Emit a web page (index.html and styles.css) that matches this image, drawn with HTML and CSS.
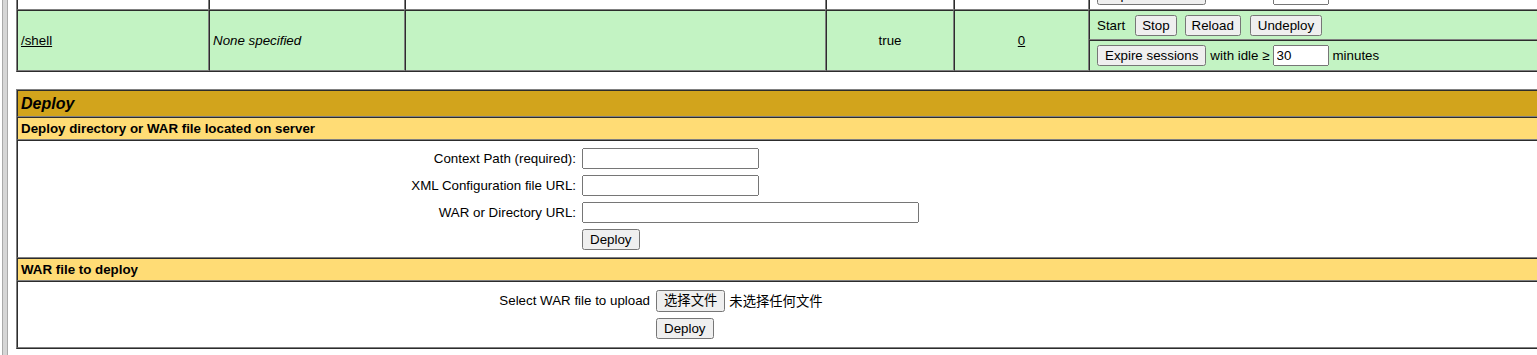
FILE: index.html
```html
<!DOCTYPE html>
<html lang="zh-CN">
<head>
    <meta charset="UTF-8">
    <title>Tomcat Web Application Manager</title>
<link rel="stylesheet" href="styles.css">
</head>
<body>
<div class="page">
    <div class="frame-edge"></div>
    <div class="content">
        <div class="apps-clip">
            <table class="apps">
                <tr class="row-white">
                    <td class="col-path" rowspan="2"><a href="#">/manager</a></td>
                    <td class="col-version" rowspan="2"><i>None specified</i></td>
                    <td class="col-name" rowspan="2">Tomcat Manager Application</td>
                    <td class="col-running" rowspan="2">true</td>
                    <td class="col-sessions" rowspan="2"><a href="#">1</a></td>
                    <td class="cmd">
                        <div class="cmd-line">
                            <span class="start">Start</span>
                            <button>Stop</button>
                            <button>Reload</button>
                            <button class="undeploy">Undeploy</button>
                        </div>
                    </td>
                </tr>
                <tr class="row-white">
                    <td class="cmd">
                        <div class="cmd-line expire">
                            <button>Expire sessions</button>
                            <span>with idle &ge;</span>
                            <input type="text" class="idle" value="30">
                            <span>minutes</span>
                        </div>
                    </td>
                </tr>
                <tr class="row-green">
                    <td class="col-path" rowspan="2"><a href="#">/shell</a></td>
                    <td class="col-version" rowspan="2"><i>None specified</i></td>
                    <td class="col-name" rowspan="2"></td>
                    <td class="col-running" rowspan="2">true</td>
                    <td class="col-sessions" rowspan="2"><a href="#">0</a></td>
                    <td class="cmd">
                        <div class="cmd-line">
                            <span class="start">Start</span>
                            <button>Stop</button>
                            <button>Reload</button>
                            <button class="undeploy">Undeploy</button>
                        </div>
                    </td>
                </tr>
                <tr class="row-green">
                    <td class="cmd">
                        <div class="cmd-line expire">
                            <button>Expire sessions</button>
                            <span>with idle &ge;</span>
                            <input type="text" class="idle" value="30">
                            <span>minutes</span>
                        </div>
                    </td>
                </tr>
            </table>
        </div>

        <table class="deploy">
            <tr>
                <td class="title">Deploy</td>
            </tr>
            <tr>
                <td class="header-left">Deploy directory or WAR file located on server</td>
            </tr>
            <tr>
                <td class="form-cell">
                    <form class="form-grid server">
                        <div class="row-right">Context Path (required):</div>
                        <div class="row-left"><input type="text" class="txt"></div>
                        <div class="row-right">XML Configuration file URL:</div>
                        <div class="row-left"><input type="text" class="txt"></div>
                        <div class="row-right">WAR or Directory URL:</div>
                        <div class="row-left"><input type="text" class="txt wide"></div>
                        <div class="row-right">&nbsp;</div>
                        <div class="row-left"><button type="button">Deploy</button></div>
                    </form>
                </td>
            </tr>
            <tr>
                <td class="header-left">WAR file to deploy</td>
            </tr>
            <tr>
                <td class="form-cell">
                    <form class="form-grid upload">
                        <div class="row-right">Select WAR file to upload</div>
                        <div class="row-left file-pick">
                            <button type="button" class="cjk">选择文件</button>
                            <span class="cjk">未选择任何文件</span>
                        </div>
                        <div class="row-right">&nbsp;</div>
                        <div class="row-left"><button type="button">Deploy</button></div>
                    </form>
                </td>
            </tr>
        </table>
    </div>
</div>
</body>
</html>
```

FILE: styles.css
```css
html, body {
    margin: 0;
    padding: 0;
    overflow: hidden;
    background: #fff;
}

body {
    font-family: "Liberation Sans", Arial, sans-serif;
    font-size: 13.33px;
    color: #000;
}

button, input {
    font-family: "Liberation Sans", Arial, sans-serif;
    font-size: 13.33px;
}

button {
    box-sizing: border-box;
    height: 21px;
    padding: 1px 6px;
}

.cjk {
    font-family: "Liberation Sans", "Noto Sans CJK SC", sans-serif;
}

button.cjk {
    height: 22px;
    line-height: 18px;
    padding: 0 6px;
}

.page {
    display: flex;
    height: 355px;
}

/* left edge of the outer frame */
.frame-edge {
    flex: none;
    margin-left: 2px;
    width: 4px;
    border-left: 1px solid #a9a9a9;
    border-right: 1px solid #a9a9a9;
    background: #d6d6d6;
}

.content {
    flex: none;
    margin-left: 8px;
    width: 1700px;
}

table {
    width: 1700px;
    table-layout: fixed;
    border: 1px outset gray;
    border-spacing: 0;
}

td {
    border: 1px inset gray;
    padding: 3px;
    box-sizing: border-box;
}

a {
    color: #000;
}

/* application list */
.apps-clip {
    margin-top: -52px;
}

.row-white td {
    background: #fff;
}

.row-green td {
    background: #c3f3c3;
}

.col-path {
    width: 192px;
}

.col-version {
    width: 196px;
}

.col-name {
    width: 421px;
}

.col-running {
    width: 128px;
    text-align: center;
}

.col-sessions {
    width: 135px;
    text-align: center;
}

.cmd {
    padding-left: 7px;
}

.cmd-line {
    display: flex;
    align-items: center;
    gap: 8px;
    min-height: 22px;
}

.cmd-line button {
    padding: 1px 5px;
}

.cmd-line button.undeploy {
    margin-left: 1px;
    padding: 1px 6px;
}

.cmd-line .start {
    margin-right: 2px;
}

.cmd-line.expire {
    gap: 4px;
    min-height: 23px;
}

.cmd-line.expire button {
    padding: 1px 6px;
}

.idle {
    box-sizing: border-box;
    width: 56px;
    height: 21px;
    margin-left: -1px;
}

/* deploy forms */
.deploy {
    margin-top: 17px;
}

.title {
    background: #d2a41c;
    font-size: 16px;
    line-height: 19px;
    font-weight: bold;
    font-style: italic;
}

.header-left {
    background: #ffdc75;
    font-weight: bold;
}

.form-grid {
    display: grid;
    margin: 0;
}

.form-grid.server {
    grid-template-columns: 558px auto;
    padding: 1px 0;
}

.form-grid.upload {
    grid-template-columns: 632px auto;
    padding: 1px 0 2px;
}

.row-right {
    padding: 3px;
    text-align: right;
    align-self: center;
}

.row-left {
    padding: 3px;
    display: flex;
    align-items: center;
    min-height: 21px;
}

.txt {
    box-sizing: border-box;
    width: 177px;
    height: 21px;
}

.txt.wide {
    width: 337px;
}

.file-pick {
    gap: 4px;
    min-height: 23px;
}
```
